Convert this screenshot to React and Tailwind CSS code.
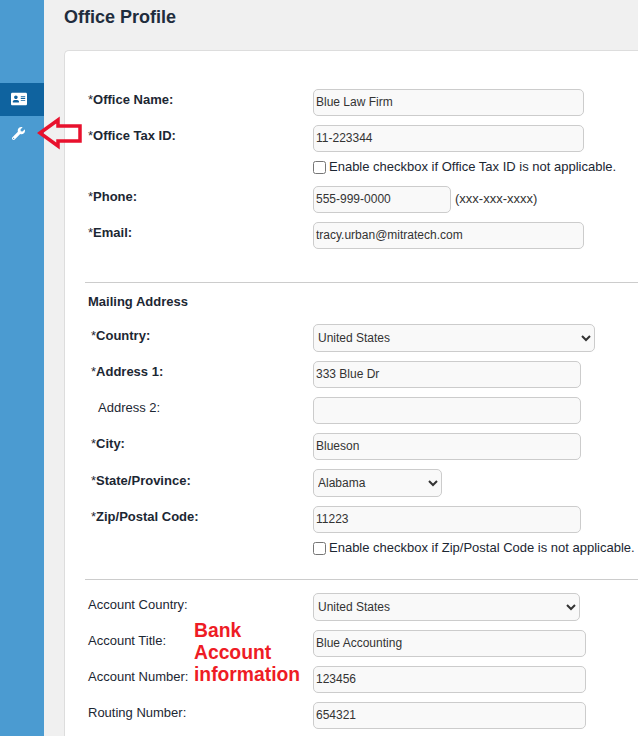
import React from 'react';
import { FaAddressCard, FaWrench } from 'react-icons/fa';

const inputCls = 'block h-[27px] rounded-[5px] border border-[#ccc] bg-[#f9f9f9] px-[2px] pb-[2px] text-[12px] text-[#333] outline-none';
const selectCls = 'block h-[28px] rounded-[5px] border border-[#ccc] bg-[#f9f9f9] text-[12px] text-[#333] outline-none';

// label column + field, the field always starts at x=313
const Row = ({ label, bold, indent = 'pl-0', width, value, select, after }) => (
  <div className="mb-[9px] flex items-start">
    <label className={`w-[225px] shrink-0 text-[13px] leading-[18px] text-[#1c2733] ${select ? 'pt-[3px]' : 'pt-[2px]'} ${indent}`}>
      {bold ? (
        <>
          *<span className="font-bold">{label}</span>
        </>
      ) : (
        label
      )}
    </label>
    {select ? (
      <select defaultValue={value} className={`${selectCls} ${width}`}>
        <option>{value}</option>
      </select>
    ) : (
      <input readOnly value={value} className={`${inputCls} ${width}`} />
    )}
    {after}
  </div>
);

const CheckRow = ({ text, className }) => (
  <div className={`ml-[225px] flex items-start whitespace-nowrap text-[13px] leading-[15px] text-[#1c2733] ${className}`}>
    <input type="checkbox" className="mt-[2px] mr-[3px] h-[13px] w-[13px] shrink-0" />
    <span>{text}</span>
  </div>
);

const Arrow = () => (
  <svg className="absolute left-[36px] top-[116px]" width="48" height="34" viewBox="0 0 48 34">
    <path d="M4 17 L22 4 L22 10 L44 10 L44 25 L22 25 L22 30 Z" fill="none" stroke="#e8112d" strokeWidth="3.5" />
  </svg>
);

export default function App() {
  return (
    <div className="relative flex h-[736px] w-[638px] overflow-hidden bg-[#f0f0f0] font-['Liberation_Sans',Arial,sans-serif]">
      {/* Sidebar */}
      <aside className="w-[44px] shrink-0 bg-[#4b9bd1] pt-[83px]">
        <div className="flex h-[33px] items-center justify-center bg-[#0f639f] pr-[6px] pb-[2px]">
          <FaAddressCard className="text-[16px] text-white" />
        </div>
        <div className="flex h-[34px] items-center justify-center pr-[7px]">
          <FaWrench className="text-[13px] text-white" />
        </div>
      </aside>

      {/* Main */}
      <main className="min-w-0 flex-1 pl-[20px]">
        <h1 className="pt-[7px] text-[18px] font-bold leading-[20px] text-[#1f2d3d]">Office Profile</h1>

        <div className="mt-[23px] rounded-tl-[5px] border-t border-l border-[#ddd] bg-white pt-[38px] pb-[40px] pl-[23px]">
          <Row label="Office Name:" bold width="w-[271px]" value="Blue Law Firm" />
          <Row label="Office Tax ID:" bold width="w-[271px]" value="11-223344" />
          <CheckRow text="Enable checkbox if Office Tax ID is not applicable." className="-mt-[2px] mb-[12px]" />
          <Row
            label="Phone:"
            bold
            width="w-[138px]"
            value="555-999-0000"
            after={<span className="ml-[4px] pt-[4px] text-[13px] leading-[18px] text-[#333]">(xxx-xxx-xxxx)</span>}
          />
          <Row label="Email:" bold width="w-[271px]" value="tracy.urban@mitratech.com" />

          <hr className="-ml-[3px] mt-[33px] border-[#ccc]" />

          <h2 className="mt-[11px] mb-[15px] text-[13px] font-bold leading-[15px] text-[#1c2733]">Mailing Address</h2>
          <Row label="Country:" bold indent="pl-[3px]" select width="w-[282px]" value="United States" />
          <Row label="Address 1:" bold indent="pl-[3px]" width="w-[268px]" value="333 Blue Dr" />
          <Row label="Address 2:" indent="pl-[10px]" width="w-[268px]" value="" />
          <Row label="City:" bold indent="pl-[3px]" width="w-[268px]" value="Blueson" />
          <Row label="State/Province:" bold indent="pl-[3px]" select width="w-[129px]" value="Alabama" />
          <Row label="Zip/Postal Code:" bold indent="pl-[3px]" width="w-[268px]" value="11223" />
          <CheckRow text="Enable checkbox if Zip/Postal Code is not applicable." className="-mt-[2px] mb-[24px]" />

          <hr className="-ml-[3px] mb-[13px] border-[#ccc]" />

          <Row label="Account Country:" select width="w-[267px]" value="United States" />
          <Row label="Account Title:" width="w-[273px]" value="Blue Accounting" />
          <Row label="Account Number:" width="w-[273px]" value="123456" />
          <Row label="Routing Number:" width="w-[273px]" value="654321" />
        </div>
      </main>

      {/* annotations drawn over the page */}
      <Arrow />
      <div className="absolute left-[194px] top-[620px] w-[110px] text-[19.3px] font-bold leading-[22px] text-[#ee1c25]">
        Bank Account information
      </div>
    </div>
  );
}
